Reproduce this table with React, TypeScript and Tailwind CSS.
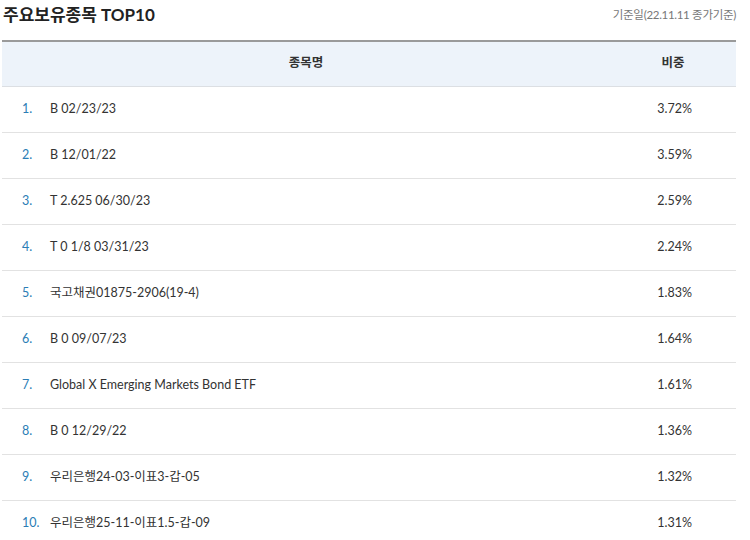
const ROWS: [string, string][] = [
  ["B 02/23/23", "3.72%"],
  ["B 12/01/22", "3.59%"],
  ["T 2.625 06/30/23", "2.59%"],
  ["T 0 1/8 03/31/23", "2.24%"],
  ["국고채권01875-2906(19-4)", "1.83%"],
  ["B 0 09/07/23", "1.64%"],
  ["Global X Emerging Markets Bond ETF", "1.61%"],
  ["B 0 12/29/22", "1.36%"],
  ["우리은행24-03-이표3-갑-05", "1.32%"],
  ["우리은행25-11-이표1.5-갑-09", "1.31%"],
];

export default function App() {
  return (
    <div
      className="h-[540px] w-[750px] overflow-hidden bg-white"
      style={{ fontFamily: 'Lato, "Noto Sans CJK KR", sans-serif' }}
    >
      <div className="flex h-[40px] items-start justify-between pl-[3px] pr-[14px]">
        <h2 className="mt-[4px] text-[17px] font-bold leading-[22px] text-[#222]">주요보유종목 TOP10</h2>
        <span className="mt-[7px] text-[11.5px] leading-[16px] tracking-[-0.3px] text-[#777]">
          기준일(22.11.11 종가기준)
        </span>
      </div>

      <table className="ml-[2px] w-[734px] border-collapse border-t-2 border-[#9a9a9a] text-[12.5px] text-[#333]">
        <thead>
          <tr className="h-[45px] border-b border-[#dcdfe3] bg-[#edf3fa]">
            <th className="text-center font-bold text-[#333]">종목명</th>
            <th className="w-[126px] text-center font-bold text-[#333]">비중</th>
          </tr>
        </thead>
        <tbody>
          {ROWS.map(([name, weight], i) => (
            <tr key={name} className="h-[46px] border-b border-[#e2e2e2]">
              <td>
                <div className="flex items-center">
                  <span className="w-[48px] pl-[20px] text-[#2b7db5]">{i + 1}.</span>
                  <span>{name}</span>
                </div>
              </td>
              <td className="pr-[44px] text-right">{weight}</td>
            </tr>
          ))}
        </tbody>
      </table>
    </div>
  );
}
